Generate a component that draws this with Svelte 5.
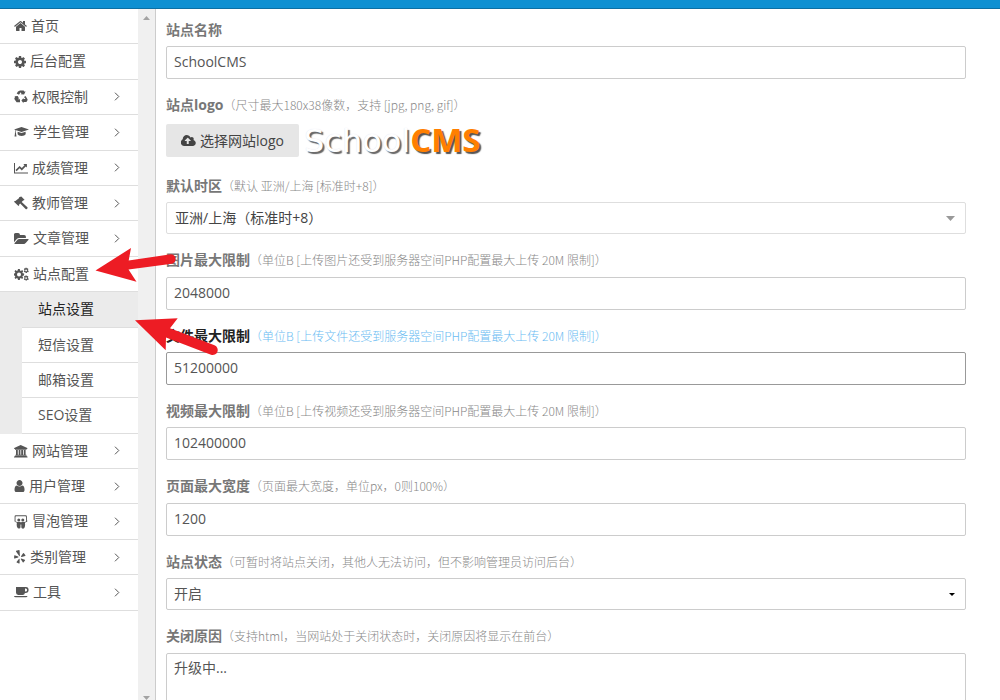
<script>
  const icons = {
    home: { w: 13, box: '64 64 1664 1664', d: 'M1472 992v480q0 26-19 45t-45 19h-384v-384h-256v384h-384q-26 0-45-19t-19-45v-480q0-1 .5-3t.5-3l575-474 575 474q1 2 1 6zm223-69l-62 74q-8 9-21 11h-3q-13 0-21-7l-692-577-692 577q-12 8-24 7-13-2-21-11l-62-74q-8-10-7-23.500t11-21.500l719-599q32-26 76-26t76 26l244 204v-195q0-14 9-23t23-9h192q14 0 23 9t9 23v408l219 182q10 8 11 21.500t-7 23.500z' },
    cog: { w: 12, box: '128 128 1536 1536', d: 'M1152 896q0-106-75-181t-181-75-181 75-75 181 75 181 181 75 181-75 75-181zm512-109v222q0 12-8 23t-20 13l-185 28q-19 54-39 91 35 50 107 138 10 12 10 25t-9 23q-27 37-99 108t-94 71q-12 0-26-9l-138-108q-44 23-91 38-16 136-29 186-7 28-36 28h-222q-14 0-24.500-8.500t-11.500-21.500l-28-184q-49-16-90-37l-141 107q-10 9-25 9-14 0-25-11-126-114-165-168-7-10-7-23 0-12 8-23 15-21 51-66.500t54-70.500q-27-50-41-99l-183-27q-13-2-21-12.500t-8-23.500v-222q0-12 8-23t19-13l186-28q14-46 39-92-40-57-107-138-10-12-10-24 0-10 9-23 26-36 98.500-107.500t94.500-71.500q13 0 26 10l138 107q44-23 91-38 16-136 29-186 7-28 36-28h222q14 0 24.500 8.500t11.500 21.500l28 184q49 16 90 37l142-107q9-9 24-9 13 0 25 10 129 119 165 170 7 8 7 22 0 12-8 23-15 21-51 66.500t-54 70.500q26 50 41 98l183 28q13 2 21 12.500t8 23.500z' },
    recycle: { w: 14, box: '0 0 14 14', d: 'M4 1.500 6 .4h3.600l1 1.300 1-.5-1.500 3.300-3.600-.2 1-.6-.9-1.500L5 4.700 2.700 3.400zM11.600 6l1.900 3.200q.4.700-.3 1.500l-.8 1.300H9.500v1.300L7.400 10.500 9.500 7.900v1.200h2L10 7zM6 9.300v3H2.600L.5 9.200Q.2 8.700.5 8L1.200 6.800.2 6.300 3.700 6l1.600 3.100-1.100-.5-.4.700z' },
    cap: { w: 15, box: '0 0 15 14', d: 'M7.500 2 15 4.500 7.500 7 2.300 5.300Q1.700 5.900 1.700 7.600q.6.300.3 1l.5 2.800H.5l.5-2.800Q.6 8 1.100 7.600 1.100 6 1.600 5L0 4.500zM3.600 6.700 7.500 8l4.100-1.300.1 2.500Q10.700 11 7.600 11T3.600 9.200z' },
    chart: { w: 14, box: '0 0 14 14', d: 'M0 2h1v9.500h13v1H0zM12.900 3v3.600l-1.200-1.100-3.900 4-2.200-2.200-3 3L1.500 9l4.100-4.100 2.200 2.200 2.700-2.800-1.200-1.200z' },
    gavel: { w: 14, box: '0 0 14 14', d: 'M7.300.6 10.500 3.800 9.800 4.500 9.300 4.300 7.700 6l5.700 5.200q.5.600 0 1.200l-.6.600q-.6.500-1.200 0L6.200 7.600 5 8.800l.2.500-.7.700L0 5.700l.7-.8.700.2L5.200 1.900 5 1.200z' },
    folder: { w: 15, box: '0 0 1820 1792', d: 'M1815 952q0 31-31 66l-336 396q-43 51-120.500 86.500t-143.500 35.500h-1088q-34 0-60.500-13t-26.500-43q0-31 31-66l336-396q43-51 120.500-86.500t143.500-35.500h1088q34 0 60.500 13t26.500 43zm-343-344v160h-832q-94 0-197 47.500t-164 119.500l-337 396-5 6q0-4-.5-12.500t-.5-12.500v-960q0-92 66-158t158-66h320q92 0 158 66t66 158v32h544q92 0 158 66t66 158z' },
    cogs: { w: 15, box: '0 0 15 14', d: 'M4 2h1.800l.3 1.500.8.4 1.300-.8 1 1.100-.8 1.200.4.9 1.300.2v1.900l-1.300.3-.4.9.8 1.200-1.100 1.100-1.200-.8-.8.400L5.800 13H4l-.4-1.500-.8-.4-1.200.8L.5 10.800l.8-1.200-.4-.9L0 8.400V6.600l1-.3.300-.9-.8-1.200 1.100-1.100 1.200.8.8-.4zM5 5.500a2 2 0 1 0 0 4 2 2 0 0 0 0-4zM11.400.700h1.300l.2.800 1-.2.500 1-.6.600.1.600.9.5-.5 1.200-1-.1-.5.800h-1.200l-.3-.8-1 .1-.5-1 .7-.7v-.6l-.6-.6.5-1 .9.200zM12.100 2.500a.9.9 0 1 0 0 1.800.9.900 0 0 0 0-1.800zM11.400 8.400h1.300l.2.800 1-.2.500 1-.6.600.1.600.9.500-.5 1.200-1-.1-.5.800h-1.200l-.3-.8-1 .1-.5-1 .7-.7v-.6l-.6-.6.5-1 .9.200zM12.100 10.200a.9.9 0 1 0 0 1.800.9.900 0 0 0 0-1.800z' },
    bank: { w: 14, box: '0 0 14 14', d: 'M6.700 1 13.300 4v1h-.8v.7H1V5H.2V4zM2 6h1.800v4.700h.9V6h1.700v4.700h.8V6H9v4.700h.8V6h1.800v4.700h.8v.7h-11v-.7H2zM.8 11.800h12v.6h.7v1H0v-1h.8z' },
    user: { w: 11, box: '192 0 1400 1792', d: 'M1536 1399q0 109-62.500 187t-150.500 78h-854q-88 0-150.500-78t-62.500-187q0-85 8.500-160.500t31.500-152 58.500-131 94-89 134.500-34.500q131 128 313 128t313-128q76 0 134.500 34.500t94 89 58.500 131 31.500 152 8.500 160.500zm-256-887q0 159-112.500 271.500t-271.500 112.500-271.500-112.500-112.500-271.500 112.500-271.500 271.500-112.500 271.500 112.500 112.500 271.500z' },
    slides: { w: 14, box: '0 0 14 14', d: 'M1.700.300h10q1.200 0 1.200 1.200v4.400l1-.4Q13.500 7 10.900 7.700q.5 2.700-.2 4.600-.8 1.800-2.400 1.200-1-.3-1-1.500V9.500H6.500V12q0 1.300-1 1.500-1.500.5-2.300-1.200-.8-1.900-.3-4.600Q.5 7 0 5.500l.6.400V1.500Q.6.300 1.700.300zM2 1.300q-.5 0-.5.600v4.600q2 .7 4.800.5.300.100.700.5l.6-.5q2.500.1 4.400-.5V1.900q0-.6-.6-.6zM4.800 3.500a1.500 1.500 0 1 1 0 3 1.500 1.500 0 0 1 0-3zM8.800 3.500a1.500 1.500 0 1 1 0 3 1.500 1.500 0 0 1 0-3z' },
    yelp: { w: 12, box: '0 0 12 14', d: 'M2.200.8 5 0q.6 0 .6.6l.3 5.100q-.1.800-.7.200L2 1.400Q1.900 1 2.200.8zM.7 5.200l3.500 1.400q.6.400 0 .8L.7 8.500Q.1 8.600.1 8l.1-2.300q.1-.6.500-.5zM5.600 9v4q-.1.600-.7.500l-2.200-.9q-.4-.4 0-.8l2.200-2.900q.5-.5.700.1zM7.300 8.500l3.500 1.200q.5.300.2.800l-1.400 1.800q-.5.4-.8 0L6.800 9.200q-.2-.7.500-.7zM7 6.300l2.100-3.100q.4-.4.800 0l1.500 2q.3.500-.3.700l-3.400 1q-.8 0-.7-.6z' },
    coffee: { w: 15, box: '0 0 15 14', d: 'M2 2h10q2.600.2 2.600 2.900T11.500 8h-.6q-.3 1.900-2.200 1.900H4.200Q2 9.900 2 7.600zM11 3.400v3.100h.6q1.500 0 1.500-1.600t-1.500-1.500zM0 10.900h13.500q-.2 1.300-1.600 1.300H1.700Q.2 12.200 0 10.900z' },
    upload: { w: 15, box: '-32 0 1920 1792', d: 'M1216 864q0-14-9-23l-352-352q-9-9-23-9t-23 9l-351 351q-10 12-10 24 0 14 9 23t23 9h224v352q0 13 9.500 22.500t22.500 9.500h192q13 0 22.500-9.500t9.500-22.500v-352h224q13 0 22.500-9.500t9.500-22.500zm640 288q0 159-112.500 271.500t-271.500 112.500h-1088q-185 0-316.500-131.500t-131.500-316.500q0-130 70-240t188-165q-2-30-2-43 0-212 150-362t362-150q156 0 285.500 87t188.500 231q71-62 166-62 106 0 181 75t75 181q0 76-41 138 130 31 213.500 135.500t83.500 238.500z' }
  };

  const menu = [
    { icon: 'home', text: '首页' },
    { icon: 'cog', text: '后台配置' },
    { icon: 'recycle', text: '权限控制', more: true },
    { icon: 'cap', text: '学生管理', more: true },
    { icon: 'chart', text: '成绩管理', more: true },
    { icon: 'gavel', text: '教师管理', more: true },
    { icon: 'folder', text: '文章管理', more: true },
    { icon: 'cogs', text: '站点配置', sub: ['站点设置', '短信设置', '邮箱设置', 'SEO设置'] },
    { icon: 'bank', text: '网站管理', more: true },
    { icon: 'user', text: '用户管理', more: true },
    { icon: 'slides', text: '冒泡管理', more: true },
    { icon: 'yelp', text: '类别管理', more: true },
    { icon: 'coffee', text: '工具', more: true }
  ];
  const active = '站点设置';

  const limits = [
    { id: 'img', label: '图片最大限制', hint: '（单位B [上传图片还受到服务器空间PHP配置最大上传 20M 限制]）', value: '2048000' },
    { id: 'file', label: '文件最大限制', hint: '（单位B [上传文件还受到服务器空间PHP配置最大上传 20M 限制]）', value: '51200000', current: true },
    { id: 'video', label: '视频最大限制', hint: '（单位B [上传视频还受到服务器空间PHP配置最大上传 20M 限制]）', value: '102400000' },
    { id: 'width', label: '页面最大宽度', hint: '（页面最大宽度，单位px，0则100%）', value: '1200' }
  ];

  let reason = $state('升级中...');
</script>

{#snippet icon(name)}
  <svg class="icon" width={icons[name].w} height="14" viewBox={icons[name].box} aria-hidden="true">
    <path d={icons[name].d} fill="currentColor" fill-rule="evenodd" />
  </svg>
{/snippet}

<div class="app">
  <header class="topbar"></header>
  <div class="body">
    <aside class="sidebar">
      <nav>
        <ul class="menu">
          {#each menu as item}
            <li>
              <a class="row" href="#top">
                {@render icon(item.icon)}
                <span class="name">{item.text}</span>
                {#if item.more}
                  <svg class="chevron" width="6" height="9" viewBox="0 0 6 9" aria-hidden="true">
                    <path d="M1 .7 4.800 4.500 1 8.300" fill="none" stroke="currentColor" stroke-width="1" />
                  </svg>
                {/if}
              </a>
              {#if item.sub}
                <ul class="submenu">
                  {#each item.sub as s}
                    <li><a class="row" class:active={s === active} href="#top">{s}</a></li>
                  {/each}
                </ul>
              {/if}
            </li>
          {/each}
        </ul>
      </nav>
      <div class="track">
        <svg width="7" height="4" viewBox="0 0 7 4" aria-hidden="true"><path d="M0 4h7L3.500 0z" fill="#a3a3a3" /></svg>
        <svg width="7" height="4" viewBox="0 0 7 4" aria-hidden="true"><path d="M0 0h7L3.500 4z" fill="#a3a3a3" /></svg>
      </div>
    </aside>

    <main>
      <form>
        <div class="group">
          <div class="caption"><label for="name">站点名称</label></div>
          <input id="name" type="text" value="SchoolCMS" />
        </div>

        <div class="group">
          <div class="caption"><label for="logo">站点logo</label><small>（尺寸最大180x38像数，支持 [jpg, png, gif]）</small></div>
          <div class="upload">
            <button id="logo" type="button">{@render icon('upload')}<span>选择网站logo</span></button>
            <span class="logo"><span class="school">School</span><b>CMS</b></span>
          </div>
        </div>

        <div class="group">
          <div class="caption"><label for="zone">默认时区</label><small>（默认 亚洲/上海 [标准时+8]）</small></div>
          <div class="select">
            <select id="zone" class="zone"><option>亚洲/上海（标准时+8）</option></select>
            <svg class="caret" width="9" height="5" viewBox="0 0 9 5" aria-hidden="true"><path d="M0 0h9L4.500 5z" fill="#999" /></svg>
          </div>
        </div>

        {#each limits as f}
          <div class="group" class:current={f.current}>
            <div class="caption"><label for={f.id}>{f.label}</label><small>{f.hint}</small></div>
            <input id={f.id} type="text" value={f.value} />
          </div>
        {/each}

        <div class="group">
          <div class="caption"><label for="state">站点状态</label><small>（可暂时将站点关闭，其他人无法访问，但不影响管理员访问后台）</small></div>
          <div class="select">
            <select id="state"><option>开启</option></select>
            <svg class="caret" width="9" height="3" viewBox="0 0 9 3" aria-hidden="true"><path d="M3 0h6L6 3z" fill="#000" /></svg>
          </div>
        </div>

        <div class="group">
          <div class="caption"><label for="reason">关闭原因</label><small>（支持html，当网站处于关闭状态时，关闭原因将显示在前台）</small></div>
          <textarea id="reason" rows="5" bind:value={reason}></textarea>
        </div>
      </form>
    </main>
  </div>

  <svg class="arrows" width="220" height="360" viewBox="0 0 220 360" aria-hidden="true">
    <g fill="#ed1c24">
      <path d="M95.500 270.500 131 248 128.700 260.500 171 254.200A4.900 4.900 0 0 1 172 263.800L128.500 269.500 136.500 281.700z" />
      <path d="M135 320.300 177.700 318.300 170 328.300 214.500 345.300A5 5 0 0 1 211 354.700L166 337.500 165.700 350.300z" />
    </g>
  </svg>
</div>

<style>
  :global(body) {
    margin: 0;
    background: #fff;
  }

  .app {
    position: relative;
    display: flex;
    flex-direction: column;
    height: 100vh;
    overflow: hidden;
    font-family: "Open Sans", "Noto Sans CJK SC", sans-serif;
    font-size: 14px;
    line-height: 1.6;
    color: #555;
  }

  .topbar {
    flex: none;
    height: 8px;
    background: #0e90d2;
    border-bottom: 1px solid #0c6fa3;
  }

  .body {
    flex: 1;
    display: flex;
    min-height: 0;
  }

  .sidebar {
    flex: none;
    display: flex;
    border-right: 1px solid #ccc;
  }

  nav {
    width: 138px;
  }

  ul {
    list-style: none;
    margin: 0;
    padding: 0;
  }

  .row {
    display: flex;
    align-items: center;
    gap: 4px;
    padding: 6px 18px 6px 14px;
    border-bottom: 1px solid #dedede;
    color: #555;
    line-height: 1.6;
    text-decoration: none;
    white-space: nowrap;
  }

  .name {
    flex: 1;
  }

  .icon {
    flex: none;
  }

  .submenu {
    padding-left: 22px;
    background: #ebebeb;
  }

  .submenu .row {
    padding: 6px 16px;
    background: #fff;
  }

  .submenu .row.active {
    background: #ebebeb;
    color: #222;
  }

  .track {
    display: flex;
    flex-direction: column;
    align-items: center;
    justify-content: space-between;
    width: 17px;
    padding-top: 7px;
    box-sizing: border-box;
    background: #f0f0f0;
  }

  main {
    flex: 1;
    min-width: 0;
    padding: 10px;
  }

  form {
    max-width: 800px;
  }

  .group {
    margin-bottom: 15px;
  }

  .caption {
    display: flex;
    align-items: baseline;
    margin-bottom: 5px;
    white-space: nowrap;
  }

  .caption label {
    font-weight: 700;
    color: #777;
  }

  small {
    font-family: "Noto Sans CJK SC", sans-serif;
    font-size: 12px;
    font-weight: 300;
    line-height: 16px;
    color: #888;
  }

  .current label {
    color: #222;
  }

  .current small {
    color: #6abcf2;
  }

  input,
  select,
  textarea {
    display: block;
    width: 100%;
    box-sizing: border-box;
    margin: 0;
    padding: 6px 7px 8px;
    border: 1px solid #ccc;
    border-radius: 2px;
    background: #fff;
    color: #555;
    font: inherit;
    line-height: 1.2;
  }

  input {
    height: 33px;
  }

  .current input {
    border-color: #999;
  }

  .select {
    display: flex;
    align-items: center;
  }

  select {
    height: 32px;
    padding: 0 7px;
    appearance: none;
  }

  .zone {
    padding-left: 8px;
    border-color: #dedede;
    color: #444;
  }

  .caret {
    flex: none;
    margin-left: -20px;
    margin-right: 11px;
    pointer-events: none;
  }

  textarea {
    resize: none;
  }

  .upload {
    display: flex;
    align-items: center;
    gap: 5px;
    height: 38px;
  }

  button {
    display: flex;
    align-items: center;
    gap: 4px;
    height: 33px;
    padding: 0 15px;
    border: 0;
    border-radius: 2px;
    background: #e6e6e6;
    color: #444;
    font: inherit;
    white-space: nowrap;
  }

  .logo {
    font-family: "DejaVu Sans", sans-serif;
    font-size: 32px;
    line-height: 40px;
    color: #fff;
    text-shadow: 2px 2px 1px #666, 0 0 1px #dde;
  }

  .logo b {
    font-family: "Open Sans", sans-serif;
    font-size: 33px;
    color: #ff7f00;
    text-shadow: 2px 2px 1px #555;
  }

  .arrows {
    position: absolute;
    top: 0;
    left: 0;
    pointer-events: none;
  }
</style>
